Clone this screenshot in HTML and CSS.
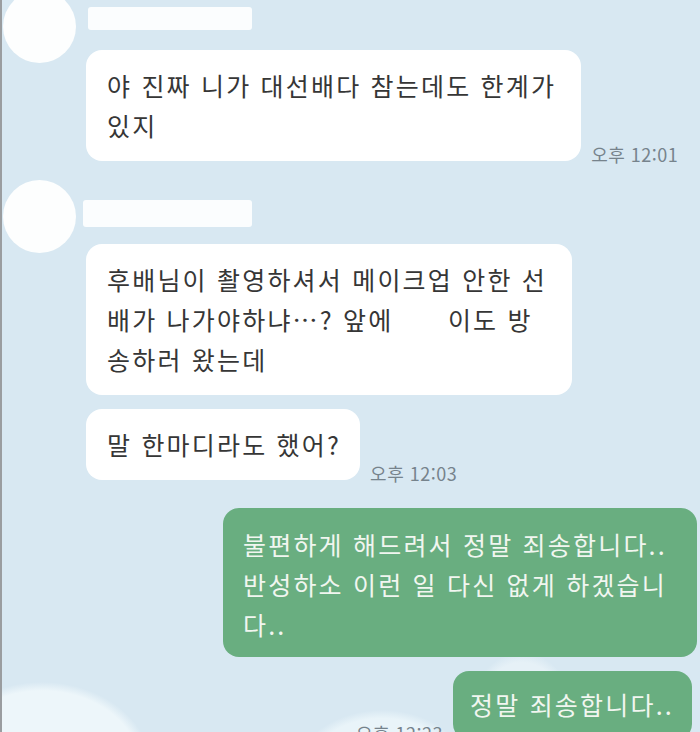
FILE: index.html
```html
<!DOCTYPE html>
<html lang="ko">
<head>
  <meta charset="UTF-8">
  <meta name="viewport" content="width=device-width, initial-scale=1.0">
  <title>채팅</title>
  <link rel="stylesheet" href="styles.css">
</head>
<body>

  <div class="screen">

    <div class="group">
      <div class="avatar first"></div>
      <div class="messages">
        <div class="name first"></div>
        <div class="row">
          <p class="bubble">야 진짜 니가 대선배다 참는데도 한계가<br>있지</p>
          <span class="time">오후 12:01</span>
        </div>
      </div>
    </div>

    <div class="group second">
      <div class="avatar"></div>
      <div class="messages">
        <div class="name second"></div>
        <div class="row">
          <p class="bubble">후배님이 촬영하셔서 메이크업 안한 선<br>배가 나가야하냐…? 앞에 <span class="blank"></span> 이도 방<br>송하러 왔는데</p>
        </div>
        <div class="row next">
          <p class="bubble short">말 한마디라도 했어?</p>
          <span class="time">오후 12:03</span>
        </div>
      </div>
    </div>

    <div class="sent">
      <div class="row">
        <p class="bubble green">불편하게 해드려서 정말 죄송합니다..<br>반성하소 이런 일 다신 없게 하겠습니<br>다..</p>
      </div>
      <div class="row last">
        <span class="time">오후 12:23</span>
        <p class="bubble green">정말 죄송합니다..</p>
      </div>
    </div>

  </div>

</body>
</html>
```

FILE: styles.css
```css
body {
  margin: 0;
  font-family: "Noto Sans CJK KR", "Noto Sans", sans-serif;
}

/* 배경 구름은 그라데이션으로 */
.screen {
  height: 732px;
  overflow: hidden;
  border-left: 2px solid #9a9da0;
  background:
    radial-gradient(ellipse 110px 88px at 40px 770px, #edf6fa 90%, transparent 100%),
    radial-gradient(ellipse 90px 70px at 380px 780px, #e9f4f9 88%, transparent 100%),
    radial-gradient(ellipse 60px 88px at 520px 740px, #e6f1f7 88%, transparent 100%),
    #d8e8f2;
}

.group {
  display: flex;
  align-items: flex-start;
}

.group.second {
  margin-top: 19px;
}

.avatar {
  width: 73px;
  height: 73px;
  margin-left: 1px;
  border-radius: 50%;
  background: #fdfefe;
  flex-shrink: 0;
}

.avatar.first {
  margin-top: -10px;
}

.messages {
  margin-left: 10px;
  display: flex;
  flex-direction: column;
}

.name {
  background: #fbfdfe;
  border-radius: 3px;
}

.name.first {
  margin: 7px 0 20px 2px;
  width: 164px;
  height: 23px;
}

.name.second {
  margin: 20px 0 17px -3px;
  width: 169px;
  height: 27px;
}

.row {
  display: flex;
  align-items: flex-end;
  gap: 10px;
}

.row.next {
  margin-top: 14px;
}

.bubble {
  margin: 0;
  padding: 15px 25px 16px 21px;
  background: #fff;
  color: #363636;
  border-radius: 16px;
  font-size: 25px;
  line-height: 40px;
  letter-spacing: 2.2px;
  white-space: nowrap;
}

.bubble.short {
  padding-right: 19px;
}

.blank {
  display: inline-block;
  width: 36px;
}

.time {
  font-size: 18px;
  line-height: 20px;
  letter-spacing: 0.5px;
  color: #76838c;
  margin-bottom: -3px;
  white-space: nowrap;
}

.sent {
  margin-top: 28px;
  display: flex;
  flex-direction: column;
  align-items: flex-end;
}

.sent .row {
  margin-right: 3px;
}

.sent .row.last {
  margin-top: 14px;
  margin-right: 8px;
}

.bubble.green {
  background: #69ae80;
  color: #f1f6f0;
  padding: 16px 30px 13px 20px;
}

.row.last .bubble.green {
  padding: 13px 18px 16px 17px;
}
```
